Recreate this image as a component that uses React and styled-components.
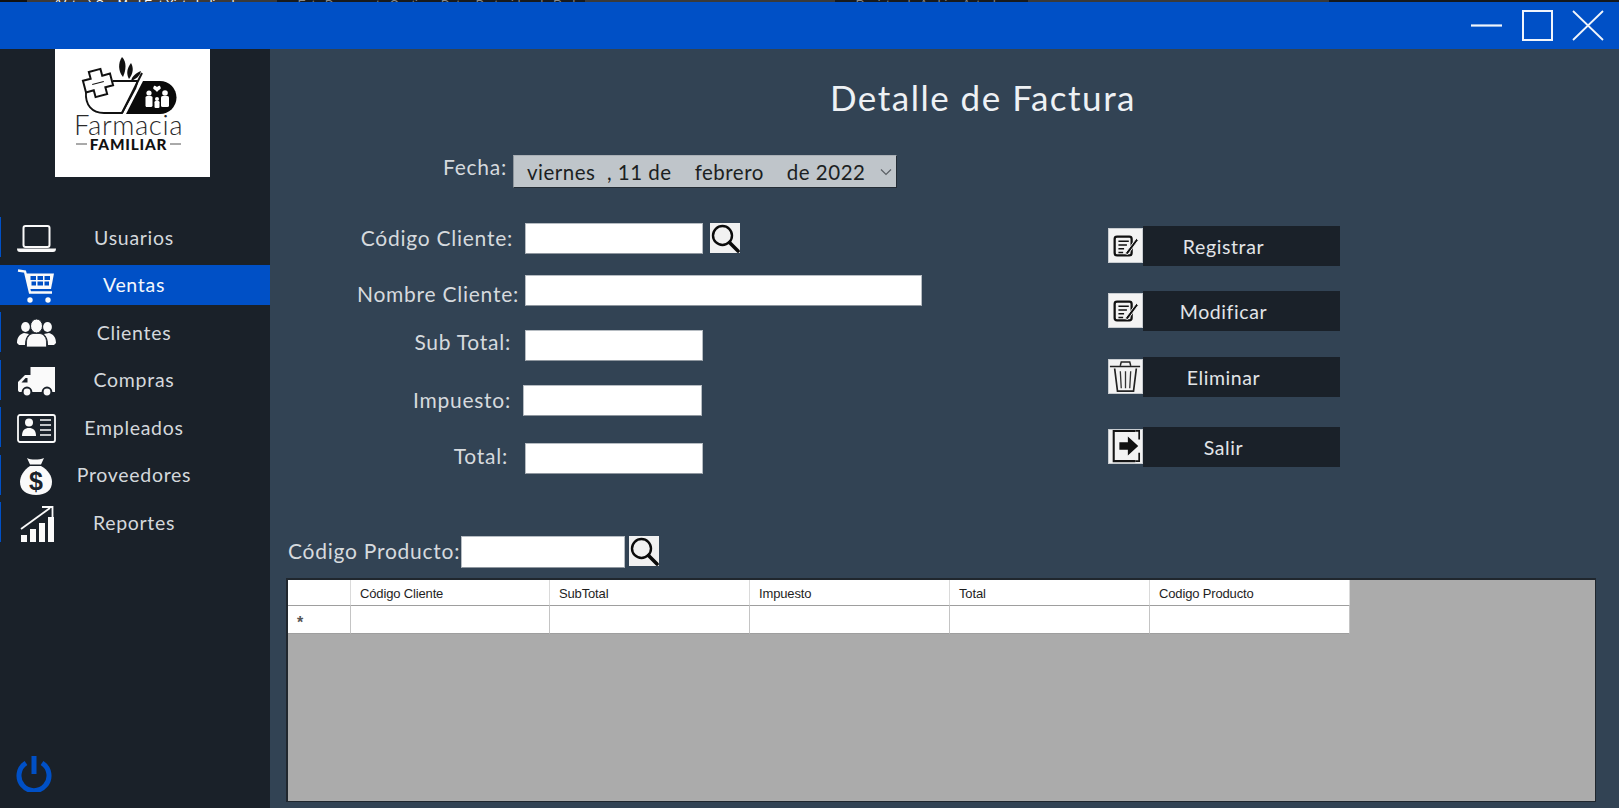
import React from "react";
import styled, { createGlobalStyle } from "styled-components";

const Global = createGlobalStyle`
  html, body { margin: 0; padding: 0; width: 1619px; height: 808px; overflow: hidden; background: #324354; }
  * { box-sizing: border-box; }
`;
const FONT = `Lato, "Open Sans", sans-serif`;

const Page = styled.div`
  width: 1619px; height: 808px; display: flex; flex-direction: column; font-family: ${FONT};
`;
const TopStrip = styled.div`
  height: 2px; overflow: hidden; display: flex; flex: none;
`;
const StripSeg = styled.div`
  width: ${p => p.$w}px; height: 2px; flex: none; overflow: hidden; background: ${p => p.$bg};
  font: 12px/12px "Liberation Sans", sans-serif; color: ${p => p.$c || "#fff"}; white-space: pre;
`;
const StripText = styled.span`
  display: block; margin-top: -1px; padding-left: 4px;
`;
const TitleBar = styled.header`
  height: 47px; flex: none; background: #0050c6; display: flex; align-items: center; justify-content: flex-end;
  padding-right: 15px; gap: 17px;
`;
const WinIcon = styled.svg`
  width: 33px; height: 33px; display: block; color: #f1f5fb;
`;
const Body = styled.div`
  flex: 1; display: flex; min-height: 0;
`;
const Sidebar = styled.aside`
  width: 270px; flex: none; background: #1a2129; display: flex; flex-direction: column;
`;
const LogoBox = styled.div`
  width: 155px; height: 128px; margin-left: 55px; background: #fff; flex: none;
`;
const LogoSvg = styled.svg`
  display: block; width: 155px; height: 128px;
`;
const Nav = styled.nav`
  margin-top: 40px; display: flex; flex-direction: column; gap: 7.5px;
`;
const NavItem = styled.div`
  height: 40px; display: flex; align-items: center; padding-left: 17px; color: ${p => (p.$active ? "#f4f7fc" : "#d4d8dc")};
  background: ${p => (p.$active ? "#0050c6" : "transparent")};
  border-left: 1px solid #0050c6; margin-left: 0;
`;
const NavIcon = styled.svg`
  width: 40px; height: 40px; flex: none; margin-left: -1px; color: #fafafa; display: block;
`;
const NavLabel = styled.span`
  width: 154px; text-align: center; font-size: 19.5px; letter-spacing: 0.7px; padding-bottom: 0;
`;
const PowerWrap = styled.div`
  margin-top: auto; padding: 0 0 16px 16px;
`;
const PowerIcon = styled.svg`
  width: 36px; height: 37px; display: block; color: #0050c6;
`;
const Main = styled.main`
  flex: 1; background: #324354; padding: 28px 23px 6px 16px; display: flex; flex-direction: column; min-width: 0;
`;
const Title = styled.h1`
  margin: 0 0 0 84px; text-align: center; height: 40px; line-height: 40px; font-weight: 400;
  font-size: 35px; letter-spacing: 1.5px; color: #eef1f4;
`;
const FieldRow = styled.div`
  display: flex; align-items: center; height: ${p => p.$h || 31}px; margin-top: ${p => p.$top || 0}px;
`;
const Label = styled.label`
  width: ${p => p.$w}px; margin-right: ${p => p.$gap}px; flex: none; text-align: ${p => p.$left ? "left" : "right"};
  padding-left: ${p => p.$left ? 2 : 0}px;
  color: #d6dade; font-size: 21px; letter-spacing: 0.75px; white-space: nowrap;
  margin-top: ${p => (p.$dy || 0) * 2}px;
`;
const TextBox = styled.div`
  width: ${p => p.$w}px; height: ${p => p.$h || 31}px; flex: none; background: #fff;
  border: 1px solid #b6bcc2; border-bottom-color: #8f979f;
`;
const SearchBtn = styled.button`
  width: 30px; height: 30px; padding: 0; border: 0; background: #f1f1f1; margin-left: ${p => p.$ml}px; flex: none;
  margin-top: ${p => p.$mt || 0}px;
`;
const Glyph = styled.svg`
  width: 100%; height: 100%; display: block;
`;
const DateBox = styled.div`
  width: 384px; height: 33px; background: #bfc5ca; border: 1px solid #232c35; border-width: 0 1px 1px 0;
  border-left: 1px solid #8e969d; border-top: 1px solid #aab0b6;
  display: flex; align-items: center; padding-left: 13px; padding-right: 4px; color: #1c1f22; font-size: 20.5px;
  letter-spacing: 0.5px; white-space: pre; justify-content: space-between; line-height: 28px;
`;
const Chevron = styled.svg`
  width: 12px; height: 8px; display: block; color: #5a5f64;
`;
const Columns = styled.div`
  display: flex; margin-top: 35px;
`;
const FormColumn = styled.div`
  width: 822px; flex: none; display: flex; flex-direction: column;
`;
const ActionColumn = styled.div`
  display: flex; flex-direction: column; padding-top: 3px;
`;
const ActionRow = styled.div`
  display: flex; align-items: flex-start; height: 40px; margin-top: ${p => p.$top || 0}px;
`;
const ActionIcon = styled.div`
  width: 35px; height: 35px; margin-top: 2px; background: #f3f3f3; flex: none; border: 1px solid #c8ccd0;
`;
const ActionBtn = styled.button`
  width: 197px; height: 40px; border: 0; background: #1a2129; color: #e2e5e8; font: 400 19.5px ${FONT};
  letter-spacing: 0.6px; padding: 0 36px 0 0; text-align: center;
`;
const DataGrid = styled.div`
  margin-top: 10px; flex: 1; min-height: 0; background: #ababab; border: 2px solid #20272e; border-width: 2px 1px 1px 2px;
`;
const GridTable = styled.div`
  width: 1062px; display: grid; grid-template-columns: 63px 199px 200px 200px 200px 200px; grid-template-rows: 26px 28px;
  background: #fff;
`;
const HeadCell = styled.div`
  border-right: 1px solid #dadada; border-bottom: 1px solid #9e9e9e; font: 13px/28px "Liberation Sans", sans-serif;
  color: #1e1e1e; padding-left: 9px; letter-spacing: -0.15px; white-space: nowrap;
`;
const BodyCell = styled.div`
  border-right: 1px solid #c4c4c4; border-bottom: 1px solid #9e9e9e; font: 700 16px/34px "Liberation Sans", sans-serif;
  color: #555; padding-left: 9px; background: #fff;
`;

const SearchGlyph = () => (
  <Glyph viewBox="0 0 30 30">
    <circle cx="12.5" cy="12.5" r="9.5" fill="none" stroke="#0b0b0b" strokeWidth="2.4" />
    <path d="M19.5 19.5 L28 28" stroke="#0b0b0b" strokeWidth="3.6" strokeLinecap="round" />
  </Glyph>
);
const NoteGlyph = () => (
  <Glyph viewBox="0 0 35 35">
    <rect x="6" y="8" width="18" height="20" rx="2.5" fill="none" stroke="#111" strokeWidth="2.4" />
    <path d="M10 13h11M10 17h9M10 21h6M10 25h5" stroke="#111" strokeWidth="1.7" />
    <path d="M17 26 L29 10 L31 12 L20 27 Z" fill="#111" stroke="#f3f3f3" strokeWidth="1" />
  </Glyph>
);
const TrashGlyph = () => (
  <Glyph viewBox="0 0 35 35">
    <path d="M1 7h32M12 6 L13 2 H22 L23 6" fill="none" stroke="#222" strokeWidth="1.6" />
    <path d="M6 9 L9 33 H26 L29 9" fill="none" stroke="#222" strokeWidth="1.8" />
    <path d="M12 12 L13 30 M17.5 12 V30 M23 12 L22 30" fill="none" stroke="#333" strokeWidth="1.4" />
  </Glyph>
);
const ExitGlyph = () => (
  <Glyph viewBox="0 0 35 35">
    <path d="M28 1 H5 V33 H28" fill="none" stroke="#151515" strokeWidth="2.2" />
    <path d="M28 1 H32 V10 M32 24 V33 H28" fill="none" stroke="#151515" strokeWidth="1.8" />
    <path d="M11 13 H20 V7 L31 17 L20 27 V21 H11 Z" fill="#111" />
  </Glyph>
);

const LogoMark = () => (
  <LogoSvg viewBox="55 49 155 128">
    <path d="M122 57 C127 62 126 70 123 77 C118 71 118 63 122 57Z" fill="#111" />
    <path d="M131 63 C134 68 133 74 129 79 C126 74 127 68 131 63Z" fill="#111" />
    <path d="M141 71 C140 76 136 79 131 81 C132 76 136 73 141 71Z" fill="#111" />
    <path d="M113 81 H137 C138 81 136 86 135 89 L122 113 H104 C92 113 85 105 86 92" fill="none" stroke="#111" strokeWidth="1.8" />
    <path d="M142 73 L122 113" fill="none" stroke="#111" strokeWidth="2" />
    <path d="M143 81 H160 A16.5 16.5 0 0 1 160 114 H126 Z" fill="#0a0a0a" />
    <g transform="rotate(-15 98 83)">
      <path d="M92 70 H104 V77 H112 V89 H104 V96 H92 V89 H84 V77 H92 Z" fill="#fff" stroke="#111" strokeWidth="2" />
      <path d="M92 83 H104" stroke="#111" strokeWidth="1" />
    </g>
    <g fill="#fff">
      <circle cx="149" cy="93" r="2.6" /><rect x="145.5" y="96" width="7" height="11" rx="1.6" />
      <rect x="146" y="105" width="2.5" height="2" /><circle cx="165" cy="93" r="2.8" />
      <rect x="161" y="96" width="8" height="11" rx="1.6" /><circle cx="157" cy="99" r="2" />
      <rect x="154.5" y="101" width="5" height="7" rx="1.2" />
      <path d="M157 92 C154 88 152 90 154 86 C155 85 157 87 157 87 C157 87 159 85 160 86 C162 90 160 88 157 92Z" />
    </g>
    <text x="128.5" y="134.5" textAnchor="middle" fontFamily={FONT} fontSize="27.5" fontWeight="300" letterSpacing="0.6" fill="#2a2a2a">Farmacia</text>
    <text x="128.5" y="150" textAnchor="middle" fontFamily={FONT} fontSize="15.3" fontWeight="900" letterSpacing="0.8" fill="#111">FAMILIAR</text>
    <path d="M76 144 H87 M170 144 H181" stroke="#555" strokeWidth="1" />
  </LogoSvg>
);

const navItems = [
  { label: "Usuarios", icon: (
    <>
      <rect x="6.5" y="9" width="26" height="21" rx="2" fill="none" stroke="currentColor" strokeWidth="2" />
      <path d="M0 31.5 H39 C39 34 38 35 36 35 H3 C1 35 0 34 0 31.5Z" fill="currentColor" />
    </>
  ) },
  { label: "Ventas", active: true, icon: (
    <>
      <path d="M1 5.5 L8 6.5 L13 27.5 H35" fill="none" stroke="currentColor" strokeWidth="2.4" />
      <path d="M8 8.5 H37 L34 24 H12 Z" fill="currentColor" />
      <g fill="#0050c6">
        <rect x="13.5" y="11" width="5.5" height="4" /><rect x="20.5" y="11" width="5.5" height="4" /><rect x="27.5" y="11" width="5.5" height="4" />
        <rect x="14.5" y="16.5" width="4.5" height="4" /><rect x="20.5" y="16.5" width="5.5" height="4" /><rect x="27.5" y="16.5" width="4.5" height="4" />
      </g>
      <circle cx="13" cy="35" r="2.7" fill="currentColor" /><circle cx="31" cy="35" r="2.7" fill="currentColor" />
    </>
  ) },
  { label: "Clientes", icon: (
    <>
      <ellipse cx="8.5" cy="15" rx="4.4" ry="5" fill="currentColor" /><ellipse cx="30.5" cy="15" rx="4.4" ry="5" fill="currentColor" />
      <path d="M0 31 C0 25 3 22 7 21 L12 22 C9 25 8 28 8 33 H2 Z M39 31 C39 25 36 22 32 21 L27 22 C30 25 31 28 31 33 H37 Z" fill="currentColor" />
      <ellipse cx="19.5" cy="14" rx="6" ry="7" fill="currentColor" stroke="#1a2129" strokeWidth="1" />
      <path d="M9.5 35 V30 C9.5 25 13 22 16 21.5 H23 C26 22 29.5 25 29.5 30 V35 Z" fill="currentColor" stroke="#1a2129" strokeWidth="0.8" />
    </>
  ) },
  { label: "Compras", icon: (
    <>
      <rect x="13.5" y="7" width="24.5" height="25" fill="currentColor" />
      <path d="M14 15 H8 L1 22 V30 C1 31.5 2 32 3 32 H14 Z" fill="currentColor" />
      <path d="M10.5 18 H8.5 L4.5 22.5 H10.5Z" fill="#1a2129" />
      <circle cx="10" cy="32" r="4.4" fill="currentColor" stroke="#1a2129" strokeWidth="2" />
      <circle cx="30" cy="32" r="4.4" fill="currentColor" stroke="#1a2129" strokeWidth="2" />
    </>
  ) },
  { label: "Empleados", icon: (
    <>
      <rect x="1" y="8" width="37" height="27" rx="2" fill="none" stroke="currentColor" strokeWidth="1.8" />
      <circle cx="12" cy="15.5" r="4" fill="currentColor" />
      <path d="M5 29 C5 23 8 21 12 21 C16 21 19 23 19 29 Z" fill="currentColor" />
      <path d="M23 13 H34 M23 18 H34 M23 23 H34 M23 28 H34" stroke="currentColor" strokeWidth="1.7" />
    </>
  ) },
  { label: "Proveedores", icon: (
    <>
      <path d="M10 3 C14 5 22 5 27 3 L24 9.5 H13 Z" fill="currentColor" />
      <path d="M13 11 H24 C31 15 35 21 35 27 C35 35 29 40 19 40 C9 40 3 35 3 27 C3 21 7 15 13 11 Z" fill="currentColor" />
      <text x="19" y="35" textAnchor="middle" fontFamily={`"Liberation Sans", sans-serif`} fontSize="25" fontWeight="700" fill="#1a2129">$</text>
    </>
  ) },
  { label: "Reportes", icon: (
    <>
      <rect x="4" y="33" width="6" height="7" fill="currentColor" />
      <rect x="13" y="27" width="6" height="13" fill="currentColor" />
      <rect x="22" y="21" width="6" height="19" fill="currentColor" />
      <rect x="31" y="15" width="6" height="25" fill="currentColor" />
      <path d="M4 27 L33 6" stroke="currentColor" strokeWidth="1.8" fill="none" />
      <path d="M25 5 H35.5 V15" stroke="currentColor" strokeWidth="1.8" fill="none" />
    </>
  ) },
];

const fields = [
  { label: "Sub Total:", w: 225, gap: 14, box: 178, top: 24, dy: -4 },
  { label: "Impuesto:", w: 225, gap: 12, box: 179, top: 24, dy: -1 },
  { label: "Total:", w: 222, gap: 17, box: 178, top: 27, dy: -3 },
];

const actions = [
  { label: "Registrar", glyph: <NoteGlyph />, top: 0 },
  { label: "Modificar", glyph: <NoteGlyph />, top: 25 },
  { label: "Eliminar", glyph: <TrashGlyph />, top: 26 },
  { label: "Salir", glyph: <ExitGlyph />, top: 30 },
];

const columns = ["", "Código Cliente", "SubTotal", "Impuesto", "Total", "Codigo Producto"];

export default function App() {
  return (
    <Page>
      <Global />
      <TopStrip>
        <StripSeg $w={27} $bg="#111" />
        <StripSeg $w={208} $bg="#3e3a38"><StripText>ser: (Votos) Ser Mod Ent Xiste Indicado</StripText></StripSeg>
        <StripSeg $w={42} $bg="#3a3a3a" />
        <StripSeg $w={308} $bg="#181a1c" $c="#8a8a8a"><StripText>     Este Documento Contiene Datos Protegidos de Red</StripText></StripSeg>
        <StripSeg $w={250} $bg="#3a3a3a" />
        <StripSeg $w={193} $bg="#181a1c" $c="#8a8a8a"><StripText>     Registro de Archivo Actual</StripText></StripSeg>
        <StripSeg $w={301} $bg="#3a3a3a" />
        <StripSeg $w={290} $bg="#14181c" />
      </TopStrip>
      <TitleBar>
        <WinIcon viewBox="0 0 33 33"><path d="M0 16.5 H31" stroke="currentColor" strokeWidth="2.2" /></WinIcon>
        <WinIcon viewBox="0 0 33 33"><rect x="2" y="2" width="29" height="29" fill="none" stroke="currentColor" strokeWidth="2" /></WinIcon>
        <WinIcon viewBox="0 0 33 33"><path d="M2 2 L32 31 M32 2 L2 31" stroke="currentColor" strokeWidth="1.8" /></WinIcon>
      </TitleBar>
      <Body>
        <Sidebar>
          <LogoBox><LogoMark /></LogoBox>
          <Nav>
            {navItems.map(n => (
              <NavItem key={n.label} $active={n.active}>
                <NavIcon viewBox="0 0 40 40">{n.icon}</NavIcon>
                <NavLabel>{n.label}</NavLabel>
              </NavItem>
            ))}
          </Nav>
          <PowerWrap>
            <PowerIcon viewBox="0 0 36 37">
              <path d="M10 8 A15 15 0 1 0 26 8" fill="none" stroke="currentColor" strokeWidth="5" />
              <path d="M18 1 V19" stroke="currentColor" strokeWidth="5" />
            </PowerIcon>
          </PowerWrap>
        </Sidebar>
        <Main>
          <Title>Detalle de Factura</Title>
          <FieldRow $h={33} $top={38}>
            <Label $w={221} $gap={6} $dy={-5}>Fecha:</Label>
            <DateBox>
              <span>viernes  , 11 de    febrero    de 2022</span>
              <Chevron viewBox="0 0 12 8"><path d="M1 1.5 L6 6.5 L11 1.5" fill="none" stroke="currentColor" strokeWidth="1.2" /></Chevron>
            </DateBox>
          </FieldRow>
          <Columns>
            <FormColumn>
              <FieldRow>
                <Label $w={227} $gap={12} $dy={-1}>Código Cliente:</Label>
                <TextBox $w={178} />
                <SearchBtn $ml={7} $mt={-1}><SearchGlyph /></SearchBtn>
              </FieldRow>
              <FieldRow $top={21}>
                <Label $w={233} $gap={6} $dy={3}>Nombre Cliente:</Label>
                <TextBox $w={397} />
              </FieldRow>
              {fields.map(f => (
                <FieldRow key={f.label} $top={f.top}>
                  <Label $w={f.w} $gap={f.gap} $dy={f.dy}>{f.label}</Label>
                  <TextBox $w={f.box} />
                </FieldRow>
              ))}
            </FormColumn>
            <ActionColumn>
              {actions.map(a => (
                <ActionRow key={a.label} $top={a.top}>
                  <ActionIcon>{a.glyph}</ActionIcon>
                  <ActionBtn>{a.label}</ActionBtn>
                </ActionRow>
              ))}
            </ActionColumn>
          </Columns>
          <FieldRow $h={32} $top={62}>
            <Label $w={175} $gap={0} $left $dy={-2}>Código Producto:</Label>
            <TextBox $w={164} $h={32} />
            <SearchBtn $ml={4} $mt={-3}><SearchGlyph /></SearchBtn>
          </FieldRow>
          <DataGrid>
            <GridTable>
              {columns.map((c, i) => <HeadCell key={i}>{c}</HeadCell>)}
              <BodyCell>*</BodyCell>
              {columns.slice(1).map((c, i) => <BodyCell key={i} />)}
            </GridTable>
          </DataGrid>
        </Main>
      </Body>
    </Page>
  );
}
